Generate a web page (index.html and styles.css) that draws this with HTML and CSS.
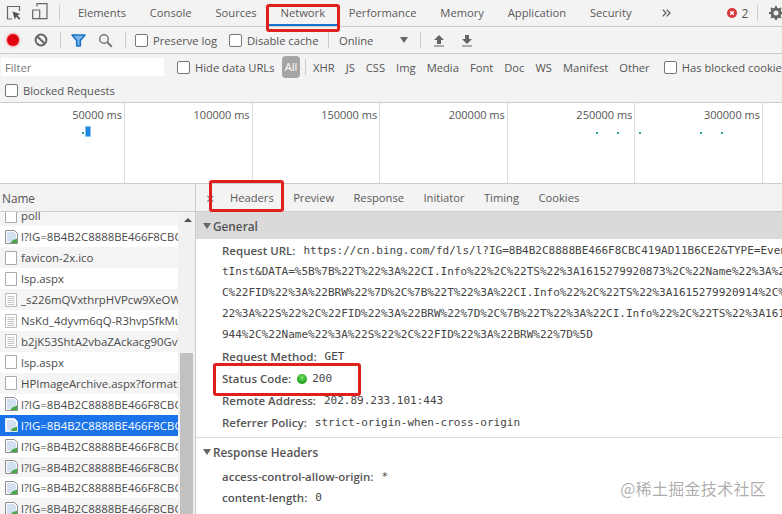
FILE: index.html
```html
<!DOCTYPE html>
<html lang="zh">
<head>
    <meta charset="UTF-8">
    <title>Network panel</title>
    <link rel="stylesheet" href="styles.css">
</head>
<body>
    <svg class="defs" width="0" height="0">
        <symbol id="file-blank" viewBox="0 0 14 16">
            <path d="M1.5 1.5h11v13h-11z" fill="#fff" stroke="#aaa"/>
        </symbol>
        <symbol id="file-doc" viewBox="0 0 14 16">
            <path d="M1.5 1.5h11v13h-11z" fill="#fff" stroke="#bbb"/>
            <path d="M3.5 4.5h7M3.5 6.5h7M3.5 8.5h7M3.5 10.5h7M3.5 12.5h7" stroke="#c4c4c4"/>
        </symbol>
        <symbol id="file-img" viewBox="0 0 14 16">
            <path d="M1.5 1.5h9l3 3v10h-12z" fill="#fff" stroke="#8f8f8f"/>
            <path d="M3 3h7l2 2v8H3z" fill="#d3e0f2"/>
            <path d="M6 14l3-3 2-.5 2-1V14z" fill="#4aa84a"/>
        </symbol>
        <symbol id="file-img-light" viewBox="0 0 14 16">
            <path d="M1.5 1.5h9l3 3v10h-12z" fill="#fff" stroke="#dfe8f5"/>
            <path d="M3 3h7l2 2v8H3z" fill="#d3e0f2"/>
            <path d="M6 14l3-3 2-.5 2-1V14z" fill="#4aa84a"/>
        </symbol>
    </svg>

    <!-- Main tabs -->
    <header class="main-tabs">
        <svg class="inspect-icon" width="16" height="16" viewBox="0 0 16 16">
            <path d="M6 14H1.5V1.5h12V6" fill="none" stroke="#666" stroke-width="1.2"/>
            <path d="M6.5 6.5l2.2 8 1.5-2.8 3 3 1.2-1.2-3-3 2.8-1.5z" fill="#555"/>
        </svg>
        <svg class="device-icon" width="16" height="17" viewBox="0 0 16 17">
            <path d="M5 3.5V.7h10v15H8" fill="none" stroke="#666" stroke-width="1.2"/>
            <path d="M.7 7h7v8.7h-7z" fill="none" stroke="#666" stroke-width="1.2"/>
        </svg>
        <span class="divider tabs-divider"></span>
        <a class="main-tab">Elements</a>
        <a class="main-tab">Console</a>
        <a class="main-tab">Sources</a>
        <a class="main-tab active">Network</a>
        <a class="main-tab">Performance</a>
        <a class="main-tab">Memory</a>
        <a class="main-tab">Application</a>
        <a class="main-tab">Security</a>
        <svg class="more-tabs" width="9" height="8" viewBox="0 0 9 8">
            <path d="M.7.7L4 4 .7 7.3M4.7.7L8 4 4.7 7.3" fill="none" stroke="#555" stroke-width="1.2"/>
        </svg>
        <span class="error-count">
            <svg width="10" height="10" viewBox="0 0 10 10">
                <circle cx="5" cy="5" r="5" fill="#d9363e"/>
                <path d="M3.2 3.2l3.6 3.6M6.8 3.2l-3.6 3.6" stroke="#fff" stroke-width="1.4"/>
            </svg>
            2
        </span>
        <span class="divider"></span>
        <svg class="gear-icon" width="14" height="14" viewBox="0 0 14 14">
            <circle cx="7" cy="7" r="4" fill="none" stroke="#666" stroke-width="3"/>
            <path d="M7 0v14M0 7h14M2 2l10 10M12 2L2 12" stroke="#666" stroke-width="2" stroke-dasharray="2.4 9.2"/>
        </svg>
    </header>

    <!-- Record toolbar -->
    <div class="toolbar">
        <span class="record-btn"></span>
        <svg class="clear-icon" width="14" height="14" viewBox="0 0 14 14">
            <circle cx="7" cy="7" r="5.4" fill="none" stroke="#666" stroke-width="2"/>
            <path d="M3.2 3.2l7.6 7.6" stroke="#666" stroke-width="2"/>
        </svg>
        <span class="divider"></span>
        <svg class="filter-icon" width="15" height="13" viewBox="0 0 15 13">
            <path d="M1 1h13L9.3 6.5V12H5.7V6.5z" fill="#7cb4e8" stroke="#1a73c8" stroke-width="1.6" stroke-linejoin="round"/>
        </svg>
        <svg class="search-icon" width="15" height="15" viewBox="0 0 15 15">
            <circle cx="6" cy="6" r="4.3" fill="none" stroke="#777" stroke-width="1.5"/>
            <path d="M9.2 9.2l4.6 4.6" stroke="#777" stroke-width="2"/>
        </svg>
        <span class="divider"></span>
        <label class="check preserve-check"><i></i>Preserve log</label>
        <label class="check cache-check"><i></i>Disable cache</label>
        <span class="divider"></span>
        <span class="throttle">Online</span>
        <span class="caret"></span>
        <span class="divider"></span>
        <svg class="arrow-up" width="12" height="13" viewBox="0 0 12 13">
            <path d="M6 1L1 6h3v4h4V6h3z" fill="#666"/>
            <path d="M1 12h10" stroke="#666"/>
        </svg>
        <svg class="arrow-down" width="12" height="13" viewBox="0 0 12 13">
            <path d="M4 1h4v4h3l-5 5-5-5h3z" fill="#666"/>
            <path d="M1 12h10" stroke="#666"/>
        </svg>
    </div>

    <!-- Filter bar -->
    <div class="filter-bar">
        <div class="filter-row">
            <span class="filter-input">Filter</span>
            <label class="check hide-check"><i></i>Hide data URLs</label>
            <span class="pill">All</span>
            <span class="divider"></span>
            <span class="type">XHR</span>
            <span class="type">JS</span>
            <span class="type">CSS</span>
            <span class="type">Img</span>
            <span class="type">Media</span>
            <span class="type">Font</span>
            <span class="type">Doc</span>
            <span class="type">WS</span>
            <span class="type">Manifest</span>
            <span class="type">Other</span>
            <label class="check cookies-check"><i></i>Has blocked cookies</label>
        </div>
        <div class="blocked-row">
            <label class="check"><i></i>Blocked Requests</label>
        </div>
    </div>

    <!-- Overview -->
    <div class="overview">
        <div class="tick">50000 ms</div>
        <div class="tick">100000 ms</div>
        <div class="tick">150000 ms</div>
        <div class="tick">200000 ms</div>
        <div class="tick">250000 ms</div>
        <div class="tick">300000 ms</div>
        <span class="mark-dot dot-a"></span>
        <span class="mark-bar"></span>
        <span class="mark-dot dot-b"></span>
        <span class="mark-dot dot-c"></span>
        <span class="mark-dot dot-d"></span>
        <span class="mark-dot dot-e"></span>
        <span class="mark-dot dot-f"></span>
    </div>

    <div class="split">
        <!-- Request list -->
        <section class="requests">
            <div class="name-header">Name</div>
            <div class="requests-body">
                <ul class="request-list">
                    <li><svg width="14" height="16"><use href="#file-blank"/></svg>poll</li>
                    <li><svg width="14" height="16"><use href="#file-img"/></svg>l?IG=8B4B2C8888BE466F8CBC419AD11B6CE2</li>
                    <li><svg width="14" height="16"><use href="#file-blank"/></svg>favicon-2x.ico</li>
                    <li><svg width="14" height="16"><use href="#file-blank"/></svg>lsp.aspx</li>
                    <li><svg width="14" height="16"><use href="#file-doc"/></svg>_s226mQVxthrpHVPcw9XeOWcFz8k.js</li>
                    <li><svg width="14" height="16"><use href="#file-doc"/></svg>NsKd_4dyvm6qQ-R3hvpSfkMuLPc.js</li>
                    <li><svg width="14" height="16"><use href="#file-doc"/></svg>b2jK53ShtA2vbaZAckacg90GvYk.js</li>
                    <li><svg width="14" height="16"><use href="#file-blank"/></svg>lsp.aspx</li>
                    <li><svg width="14" height="16"><use href="#file-blank"/></svg>HPImageArchive.aspx?format.js</li>
                    <li><svg width="14" height="16"><use href="#file-img"/></svg>l?IG=8B4B2C8888BE466F8CBC419AD11B6CE2</li>
                    <li class="selected"><svg width="14" height="16"><use href="#file-img-light"/></svg>l?IG=8B4B2C8888BE466F8CBC419AD11B6CE2</li>
                    <li><svg width="14" height="16"><use href="#file-img"/></svg>l?IG=8B4B2C8888BE466F8CBC419AD11B6CE2</li>
                    <li><svg width="14" height="16"><use href="#file-img"/></svg>l?IG=8B4B2C8888BE466F8CBC419AD11B6CE2</li>
                    <li><svg width="14" height="16"><use href="#file-img"/></svg>l?IG=8B4B2C8888BE466F8CBC419AD11B6CE2</li>
                    <li><svg width="14" height="16"><use href="#file-img"/></svg>l?IG=8B4B2C8888BE466F8CBC419AD11B6CE2</li>
                </ul>
                <div class="scrollbar">
                    <span class="scroll-up"></span>
                    <span class="scroll-thumb"></span>
                </div>
            </div>
        </section>

        <!-- Details -->
        <section class="details">
            <nav class="detail-tabs">
                <span class="close-x">×</span>
                <a class="detail-tab">Headers</a>
                <a class="detail-tab">Preview</a>
                <a class="detail-tab">Response</a>
                <a class="detail-tab">Initiator</a>
                <a class="detail-tab">Timing</a>
                <a class="detail-tab">Cookies</a>
            </nav>
            <h3 class="group-title general"><span class="tri"></span>General</h3>
            <div class="line"><b>Request URL:</b><code>https://cn.bing.com/fd/ls/l?IG=8B4B2C8888BE466F8CBC419AD11B6CE2&amp;TYPE=Event.Clien</code></div>
            <div class="line"><code>tInst&amp;DATA=%5B%7B%22T%22%3A%22CI.Info%22%2C%22TS%22%3A1615279920873%2C%22Name%22%3A%22S%22%2</code></div>
            <div class="line"><code>C%22FID%22%3A%22BRW%22%7D%2C%7B%22T%22%3A%22CI.Info%22%2C%22TS%22%3A1615279920914%2C%22Name%</code></div>
            <div class="line"><code>22%3A%22S%22%2C%22FID%22%3A%22BRW%22%7D%2C%7B%22T%22%3A%22CI.Info%22%2C%22TS%22%3A1615279920</code></div>
            <div class="line"><code>944%2C%22Name%22%3A%22S%22%2C%22FID%22%3A%22BRW%22%7D%5D</code></div>
            <div class="line tall first-tall"><b>Request Method:</b><code>GET</code></div>
            <div class="line tall"><b>Status Code:</b><span class="status-dot"></span><code>200</code></div>
            <div class="line tall"><b>Remote Address:</b><code>202.89.233.101:443</code></div>
            <div class="line tall"><b>Referrer Policy:</b><code>strict-origin-when-cross-origin</code></div>
            <h3 class="group-title response"><span class="tri"></span>Response Headers</h3>
            <div class="line"><b>access-control-allow-origin:</b><code>*</code></div>
            <div class="line"><b>content-length:</b><code>0</code></div>
        </section>
    </div>

    <!-- Annotations -->
    <span class="red-box box-network"></span>
    <span class="red-box box-headers"></span>
    <span class="red-box box-status"></span>
    <span class="watermark">@稀土掘金技术社区</span>
</body>
</html>
```

FILE: styles.css
```css
html, body {
    margin: 0;
    padding: 0;
}

body {
    position: relative;
    width: 782px;
    height: 514px;
    overflow: hidden;
    display: flex;
    flex-direction: column;
    background: #fff;
    font-family: "Open Sans", "Noto Sans", sans-serif;
    font-size: 11.2px;
    color: #555;
}

.defs {
    position: absolute;
}

.divider {
    width: 1px;
    height: 16px;
    background: #ccc;
}

/* main tabs */
.main-tabs {
    height: 26px;
    flex: none;
    display: flex;
    align-items: center;
    background: #f3f3f3;
    border-bottom: 1px solid #ccc;
    white-space: nowrap;
}

.main-tabs > *,
.toolbar > *,
.filter-row > * {
    flex: none;
}

.inspect-icon {
    margin-left: 6px;
}

.device-icon {
    margin-left: 10px;
    margin-top: -3px;
}

.tabs-divider {
    margin: 0 6px 0 11px;
}

.main-tab {
    height: 24px;
    line-height: 26px;
    padding: 0 11.9px;
    border-bottom: 2px solid transparent;
    color: #5a5a5a;
}

.main-tab.active {
    border-bottom-color: #1a73c8;
}

.more-tabs {
    margin-left: 19px;
}

.error-count {
    margin-left: 56px;
    margin-right: 9px;
    display: flex;
    align-items: center;
    gap: 4px;
    font-size: 12px;
}

.gear-icon {
    margin-left: 11px;
}

/* record toolbar */
.toolbar {
    height: 26px;
    flex: none;
    display: flex;
    align-items: center;
    background: #f3f3f3;
    border-bottom: 1px solid #ccc;
    white-space: nowrap;
}

.record-btn {
    width: 12px;
    height: 12px;
    margin-left: 7px;
    border-radius: 50%;
    background: #e00010;
    box-shadow: 0 0 2px 1px #f2a0a0;
}

.clear-icon {
    margin-left: 15px;
}

.toolbar .divider {
    margin-left: 12px;
}

.filter-icon {
    margin-left: 10px;
}

.search-icon {
    margin-left: 12px;
}

.check {
    display: flex;
    align-items: center;
    white-space: nowrap;
}

.check i {
    width: 11px;
    height: 11px;
    margin-right: 5px;
    background: #fff;
    border: 1px solid #767676;
    border-radius: 2px;
    flex: none;
}

.preserve-check {
    margin-left: 9px;
    width: 94px;
}

.cache-check {
    width: 87px;
}

.throttle {
    margin-left: 10px;
    width: 61px;
}

.caret {
    width: 0;
    height: 0;
    border-left: 4px solid transparent;
    border-right: 4px solid transparent;
    border-top: 6px solid #666;
}

.arrow-up {
    margin-left: 12px;
}

.arrow-down {
    margin-left: 16px;
}

/* filter bar */
.filter-bar {
    height: 48px;
    flex: none;
    background: #f3f3f3;
    border-bottom: 1px solid #ccc;
}

.filter-row {
    height: 26px;
    display: flex;
    align-items: center;
    white-space: nowrap;
}

.filter-input {
    width: 159px;
    height: 18px;
    line-height: 20px;
    margin-left: 1px;
    padding-left: 4px;
    background: #fff;
    color: #777;
}

.hide-check {
    margin-left: 13px;
    width: 105px;
}

.pill {
    width: 18px;
    height: 22px;
    line-height: 22px;
    text-align: center;
    border-radius: 4px;
    background: #a5a5a5;
    color: #fff;
}

.filter-row .divider {
    margin: 0 7px 0 5px;
}

.type {
    margin-right: 11px;
}

.cookies-check {
    margin-left: 3px;
}

.blocked-row {
    height: 21px;
    padding-left: 5px;
    display: flex;
    align-items: center;
}

/* overview */
.overview {
    position: relative;
    height: 80px;
    flex: none;
    display: grid;
    grid-template-columns: 125px repeat(5, 127.6px);
    border-bottom: 1px solid #ccc;
    font-size: 11px;
}

.tick {
    padding: 4px 2px 0 0;
    text-align: right;
    border-right: 1px solid #ddd;
    color: #555;
}

.mark-dot {
    position: absolute;
    top: 29px;
    width: 2px;
    height: 2px;
    background: #2a9d9d;
}

.dot-a { left: 82px; }
.dot-b { left: 596px; }
.dot-c { left: 617px; }
.dot-d { left: 639px; }
.dot-e { left: 700px; }
.dot-f { left: 721px; }

.mark-bar {
    position: absolute;
    left: 85px;
    top: 23px;
    width: 4px;
    height: 9px;
    background: #1c86e0;
    border: 1px solid #8fc4ee;
}

/* split view */
.split {
    flex: 1;
    min-height: 0;
    display: flex;
}

.requests {
    width: 195px;
    flex: none;
    display: flex;
    flex-direction: column;
    border-right: 1px solid #ccc;
}

.name-header {
    height: 27px;
    line-height: 29px;
    flex: none;
    padding-left: 2px;
    background: #f3f3f3;
    border-bottom: 1px solid #ccc;
    font-size: 11.8px;
}

.requests-body {
    flex: 1;
    min-height: 0;
    display: flex;
    overflow: hidden;
}

.request-list {
    width: 178px;
    flex: none;
    margin: -6.5px 0 0;
    padding: 0;
    list-style: none;
}

.request-list li {
    height: 20.93px;
    padding-left: 4px;
    display: flex;
    align-items: center;
    gap: 3px;
    overflow: hidden;
    white-space: nowrap;
    font-size: 11.4px;
    color: #4a4a4a;
}

.request-list li svg {
    flex: none;
}

.request-list li:nth-child(odd) {
    background: #f5f5f5;
}

.request-list li.selected {
    background: #1a73e8;
    color: #fff;
}

.scrollbar {
    flex: 1;
    background: #f1f1f1;
    display: flex;
    flex-direction: column;
    padding-left: 2px;
}

.scroll-up {
    width: 0;
    height: 0;
    margin: 6px 0 0 4px;
    border-left: 4px solid transparent;
    border-right: 4px solid transparent;
    border-bottom: 4px solid #505050;
}

.scroll-thumb {
    width: 13px;
    flex: 1;
    margin-top: 131px;
    background: #c1c1c1;
}

/* detail pane */
.details {
    flex: 1;
    min-width: 0;
    white-space: nowrap;
}

.detail-tabs {
    height: 27px;
    display: flex;
    align-items: center;
    padding-left: 10px;
    border-bottom: 1px solid #ccc;
    background: #f3f3f3;
}

.close-x {
    width: 14.3px;
    font-size: 15px;
    line-height: 26px;
    color: #777;
}

.detail-tab {
    padding: 0 9.7px;
    line-height: 28px;
    color: #5a5a5a;
}

.group-title {
    margin: 0;
    height: 27px;
    padding-left: 7px;
    display: flex;
    align-items: center;
    gap: 2px;
    font-size: 11.8px;
    font-weight: 600;
    color: #555;
}

.group-title.general {
    background: #dadada;
    margin-bottom: 1px;
}

.group-title.response {
    height: 28px;
    margin-top: 3.5px;
    border-top: 1px solid #ddd;
}

.tri {
    width: 0;
    height: 0;
    border-left: 4px solid transparent;
    border-right: 4px solid transparent;
    border-top: 6px solid #666;
}

.line {
    height: 21px;
    line-height: 21px;
    padding-left: 26px;
    display: flex;
    align-items: center;
    color: #555;
}

.line.tall {
    height: 22px;
    line-height: 22px;
}

.line.first-tall {
    margin-top: 0.5px;
}

.line b {
    font-size: 11.5px;
    font-weight: 600;
    margin-right: 8px;
}

.line code {
    font-family: "DejaVu Sans Mono", "Liberation Mono", monospace;
    font-size: 11px;
    color: #444;
}

.status-dot {
    width: 10px;
    height: 10px;
    margin: 0 5px 0 -2px;
    border-radius: 50%;
    background: radial-gradient(circle at 50% 35%, #7be36a, #18a018 70%);
}

/* annotations */
.red-box {
    position: absolute;
    box-sizing: border-box;
    border: 3px solid #e0201c;
    border-radius: 3px;
}

.box-network {
    left: 266px;
    top: 4px;
    width: 74px;
    height: 28px;
}

.box-headers {
    left: 209px;
    top: 180px;
    width: 75px;
    height: 32px;
}

.box-status {
    left: 213px;
    top: 363px;
    width: 148px;
    height: 33px;
}

.watermark {
    position: absolute;
    right: 16px;
    bottom: 17px;
    font-family: "Noto Sans CJK SC", sans-serif;
    font-size: 16px;
    letter-spacing: 0.3px;
    line-height: 18px;
    color: rgba(120, 120, 120, 0.6);
}
```
